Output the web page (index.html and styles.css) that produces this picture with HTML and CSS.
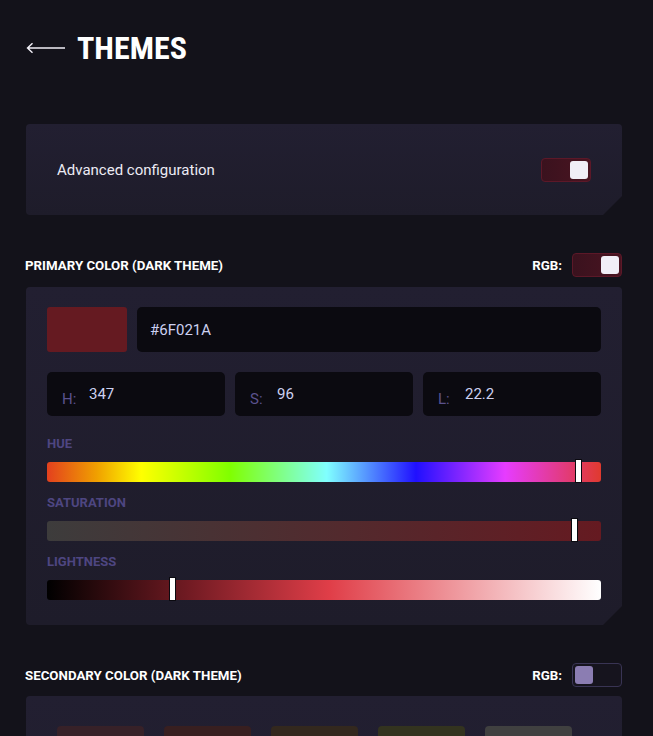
FILE: index.html
```html
<!DOCTYPE html>
<html>
<head>
<meta charset="utf-8">
<title>Themes</title>
<link rel="stylesheet" href="styles.css">
</head>
<body>
<div class="page">
  <header class="header">
    <svg class="back" width="40" height="14" viewBox="0 0 40 14"><path d="M39 7H1.5M6.5 2.2L1.5 7l5 4.8" fill="none" stroke="#f2f0f8" stroke-width="1.4"/></svg>
    <h1 class="title">THEMES</h1>
  </header>

  <section class="card card-adv">
    <span class="adv-label">Advanced configuration</span>
    <div class="toggle on"><span class="knob"></span></div>
  </section>

  <div class="sec-head">
    <span class="sec-title">PRIMARY COLOR (DARK THEME)</span>
    <div class="rgb"><span class="rgb-label">RGB:</span><div class="toggle on"><span class="knob"></span></div></div>
  </div>

  <section class="card card-color">
    <div class="row-hex">
      <div class="swatch-main"></div>
      <div class="field"><span class="val">#6F021A</span></div>
    </div>
    <div class="row-hsl">
      <div class="field"><span class="lab">H:</span><span class="val">347</span></div>
      <div class="field"><span class="lab">S:</span><span class="val">96</span></div>
      <div class="field"><span class="lab">L:</span><span class="val">22.2</span></div>
    </div>
    <div class="slider slider-first">
      <div class="slider-label">HUE</div>
      <div class="bar bar-hue"><span class="handle" style="left: 95.8%"></span></div>
    </div>
    <div class="slider">
      <div class="slider-label">SATURATION</div>
      <div class="bar bar-sat"><span class="handle" style="left: 95.2%"></span></div>
    </div>
    <div class="slider">
      <div class="slider-label">LIGHTNESS</div>
      <div class="bar bar-light"><span class="handle" style="left: 22.6%"></span></div>
    </div>
  </section>

  <div class="sec-head sec-head-2">
    <span class="sec-title">SECONDARY COLOR (DARK THEME)</span>
    <div class="rgb"><span class="rgb-label">RGB:</span><div class="toggle off"><span class="knob"></span></div></div>
  </div>

  <section class="card card-sec">
    <div class="swatches">
      <div class="sw sw1"></div>
      <div class="sw sw2"></div>
      <div class="sw sw3"></div>
      <div class="sw sw4"></div>
      <div class="sw sw5"></div>
    </div>
  </section>
</div>
</body>
</html>
```

FILE: styles.css
```css
html, body {
  margin: 0;
  padding: 0;
  background: #13121a;
  height: 100%;
  overflow: hidden;
}
body {
  font-family: Roboto, "Noto Sans", "Liberation Sans", sans-serif;
  color: #f2f0f8;
}
.page {
  width: 596px;
  margin-left: 26px;
  padding-top: 30px;
}
.header {
  display: flex;
  align-items: center;
  height: 36px;
  gap: 11px;
}
.back {
  display: block;
}
.title {
  margin: 0;
  font-family: "Roboto Condensed", "Liberation Sans Narrow", Roboto, sans-serif;
  font-stretch: condensed;
  font-weight: 700;
  font-size: 32px;
  letter-spacing: 0;
  line-height: 36px;
  color: #ffffff;
}
.card {
  background: linear-gradient(180deg, #221f31 0%, #1e1c2a 100%);
  border-radius: 4px;
  clip-path: polygon(0 0, 100% 0, 100% calc(100% - 19px), calc(100% - 19px) 100%, 0 100%);
}
.card-adv {
  margin-top: 58px;
  height: 91px;
  box-sizing: border-box;
  padding: 0 31px;
  display: flex;
  align-items: center;
  justify-content: space-between;
}
.adv-label {
  font-size: 15px;
  color: #ecebf4;
}
.toggle {
  width: 50px;
  height: 24px;
  box-sizing: border-box;
  border-radius: 4px;
  display: flex;
  align-items: center;
  padding: 0 2px;
}
.toggle .knob {
  width: 18px;
  height: 18px;
  border-radius: 3px;
}
.toggle.on {
  background: linear-gradient(90deg, #3a121e, #4a1421);
  border: 1px solid #5c1828;
  justify-content: flex-end;
}
.toggle.on .knob {
  background: #f1eef6;
}
.toggle.off {
  background: #16141e;
  border: 1px solid #393454;
  justify-content: flex-start;
}
.toggle.off .knob {
  background: #8b7db2;
}
.sec-head {
  margin-top: 38px;
  height: 24px;
  display: flex;
  align-items: center;
  justify-content: space-between;
}
.sec-title {
  font-size: 13.3px;
  font-weight: 700;
  color: #ffffff;
  margin-left: -1px;
}
.rgb {
  display: flex;
  align-items: center;
  gap: 10px;
}
.rgb-label {
  font-size: 13.3px;
  font-weight: 700;
  color: #ffffff;
}
.card-color {
  margin-top: 10px;
  padding: 20px 21px 25px 21px;
}
.row-hex {
  display: grid;
  grid-template-columns: 80px 1fr;
  gap: 10px;
  height: 45px;
}
.swatch-main {
  background: #651a21;
  border-radius: 3px;
}
.field {
  background: #0b0a10;
  border-radius: 5px;
  display: flex;
  align-items: center;
  padding-left: 13px;
  font-size: 15px;
}
.val {
  color: #cdd1f1;
}
.row-hsl {
  margin-top: 20px;
  display: grid;
  grid-template-columns: repeat(3, 1fr);
  gap: 10px;
  height: 44px;
}
.row-hsl .field {
  padding-left: 15px;
}
.lab {
  color: #5b528e;
  padding-top: 9px;
  width: 27px;
}
.slider {
  margin-top: 14px;
}
.slider-first {
  margin-top: 21px;
}
.slider-label {
  font-size: 13px;
  font-weight: 700;
  line-height: 14px;
  color: #4e4681;
  margin-bottom: 11px;
}
.bar {
  position: relative;
  height: 20px;
  border-radius: 3px;
}
.bar-hue {
  background: linear-gradient(90deg, #e3401e 0%, #f0a000 9%, #ffff00 17%, #80ff00 33%, #80ffff 50.5%, #2010ff 66.6%, #e63cff 82.7%, #e03a2e 100%);
}
.bar-sat {
  background: linear-gradient(90deg, #3d3c3c 0%, #651a21 100%);
}
.bar-light {
  background: linear-gradient(90deg, #000000 0%, #6f1a22 25%, #e03e48 51%, #ffffff 100%);
}
.handle {
  position: absolute;
  top: -3px;
  width: 5px;
  height: 22px;
  margin-left: -3px;
  background: #ffffff;
  border: 1px solid #0b0a10;
}
.card-sec {
  margin-top: 9px;
  padding: 30px 31px 30px 31px;
  height: 200px;
}
.swatches {
  display: flex;
  gap: 20px;
}
.sw {
  width: 87px;
  height: 40px;
  border-radius: 4px;
}
.sw1 { background: #372128; }
.sw2 { background: #381f20; }
.sw3 { background: #33281e; }
.sw4 { background: #33331f; }
.sw5 { background: #404040; }
```
